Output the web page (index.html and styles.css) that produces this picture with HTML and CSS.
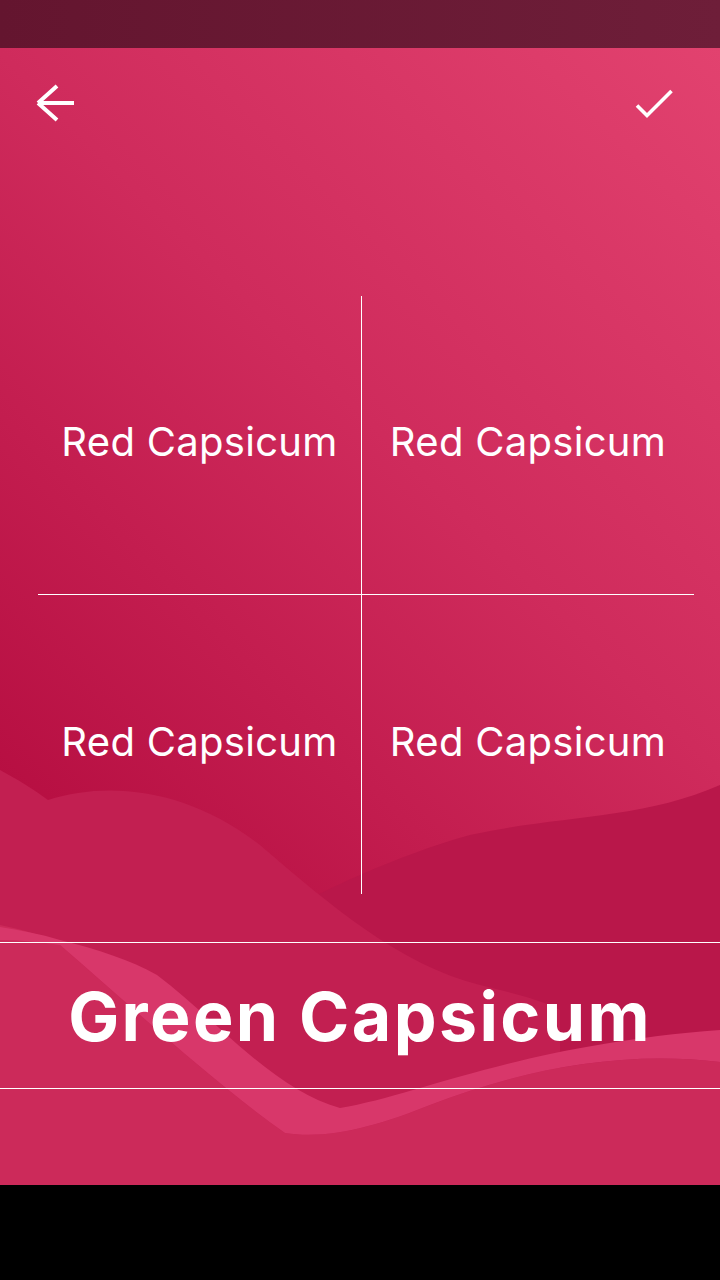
FILE: index.html
```html
<!DOCTYPE html>
<html>
<head>
<meta charset="utf-8">
<link rel="stylesheet" href="styles.css">
</head>
<body>
<div class="screen">
  <div class="status"></div>
  <div class="app">
    <svg class="waves" viewBox="0 48 720 1137" preserveAspectRatio="none">
      <path class="w-dark" d="M200,960 C280,910 380,860 470,835 C560,815 640,820 720,785 L720,1185 L200,1185 Z"/>
      <path class="w-mid" d="M0,770 C15,778 35,790 48,800 C110,780 190,790 260,845 C330,905 400,965 480,985 C520,995 540,1000 560,1010 L560,1185 L0,1185 Z"/>
      <path class="w-bottom" d="M0,925 C25,930 45,936 60,945 C130,1005 210,1080 285,1133 C330,1140 380,1125 430,1105 C520,1070 620,1050 720,1062 L720,1185 L0,1185 Z"/>
      <path class="w-light" d="M0,927 C20,930 40,934 60,940 C100,950 130,960 157,975 C190,1000 220,1030 250,1055 C280,1080 310,1100 340,1108 C420,1095 520,1045 720,1030 L720,1062 C620,1050 520,1070 430,1105 C380,1125 330,1140 285,1133 C210,1080 130,1005 60,945 C40,942 20,940 0,940 Z"/>
    </svg>
    <div class="content">
      <div class="toolbar">
        <svg class="icon" viewBox="0 0 48 48">
          <path d="M6,24 L25,7 M6,24 L25,41 M6,24 L42,24" fill="none" stroke="#fff" stroke-width="4"/>
        </svg>
        <svg class="icon" viewBox="0 0 48 48">
          <path d="M7,26.5 L17,36.5 L41.5,12" fill="none" stroke="#fff" stroke-width="3.6"/>
        </svg>
      </div>
      <div class="grid">
        <div class="cell tl">Red Capsicum</div>
        <div class="cell tr">Red Capsicum</div>
        <div class="cell bl">Red Capsicum</div>
        <div class="cell br">Red Capsicum</div>
      </div>
      <div class="band">Green Capsicum</div>
    </div>
  </div>
</div>
</body>
</html>
```

FILE: styles.css
```css
* { box-sizing: border-box; }
body {
  margin: 0;
  background: #000;
  font-family: Inter, "Liberation Sans", sans-serif;
}
.screen {
  width: 720px;
  height: 1280px;
  display: flex;
  flex-direction: column;
}
.status {
  height: 48px;
  background: linear-gradient(90deg, #64152f, #6e1e39);
}
.app {
  position: relative;
  height: 1137px;
  overflow: hidden;
  color: #fff;
  background: linear-gradient(225deg, #e2426f 0%, #cf2b5c 39%, #b70f42 78%, #b30d40 100%);
}
.waves {
  position: absolute;
  left: 0;
  top: 0;
  width: 100%;
  height: 100%;
}
.w-dark { fill: #b9174a; }
.w-mid { fill: #c21f51; }
.w-bottom { fill: #cc2a5a; }
.w-light { fill: #d8376a; }
.content {
  position: relative;
  display: flex;
  flex-direction: column;
}
.toolbar {
  height: 110px;
  display: flex;
  justify-content: space-between;
  align-items: center;
  padding: 0 42px 0 32px;
}
.icon {
  width: 48px;
  height: 48px;
  display: block;
}
.grid {
  margin: 138px 0 0 38px;
  display: grid;
  grid-template-columns: 324px 332px;
  grid-template-rows: 299px 299px;
}
.cell {
  display: flex;
  align-items: center;
  justify-content: center;
  padding-bottom: 7px;
  font-size: 40px;
  font-weight: 400;
  letter-spacing: 0.3px;
}
.tl { border-right: 1px solid #fff; border-bottom: 1px solid #fff; }
.tr { border-bottom: 1px solid #fff; }
.bl { border-right: 1px solid #fff; }
.band {
  margin-top: 48px;
  height: 147px;
  border-top: 1px solid #fff;
  border-bottom: 1px solid #fff;
  display: flex;
  align-items: center;
  justify-content: center;
  font-size: 68px;
  font-weight: 700;
  letter-spacing: 2.4px;
}
```
